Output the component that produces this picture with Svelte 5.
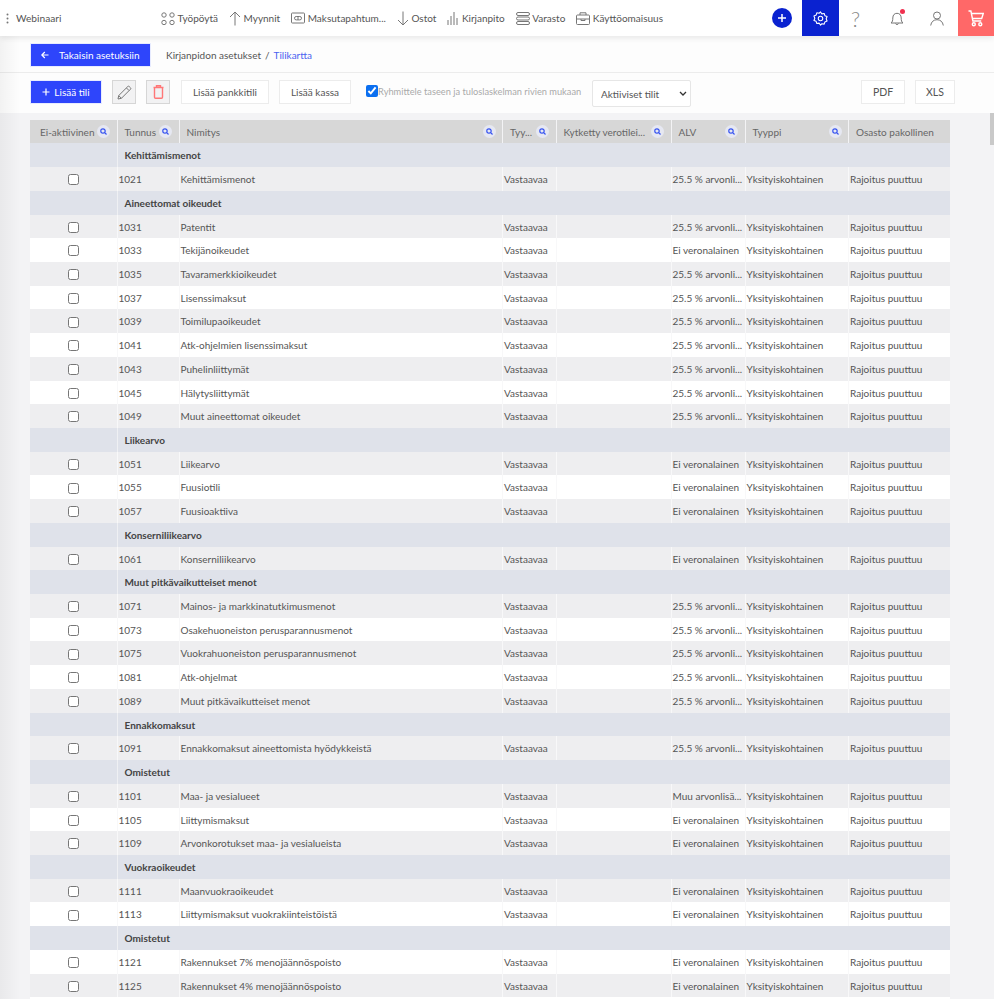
<script>
  const groups = [
    ['Kehittämismenot', [['1021','Kehittämismenot','a']]],
    ['Aineettomat oikeudet', [['1031','Patentit','a'],['1033','Tekijänoikeudet','e'],['1035','Tavaramerkkioikeudet','a'],['1037','Lisenssimaksut','a'],['1039','Toimilupaoikeudet','a'],['1041','Atk-ohjelmien lisenssimaksut','a'],['1043','Puhelinliittymät','a'],['1045','Hälytysliittymät','a'],['1049','Muut aineettomat oikeudet','a']]],
    ['Liikearvo', [['1051','Liikearvo','e'],['1055','Fuusiotili','e'],['1057','Fuusioaktiiva','e']]],
    ['Konserniliikearvo', [['1061','Konserniliikearvo','e']]],
    ['Muut pitkävaikutteiset menot', [['1071','Mainos- ja markkinatutkimusmenot','a'],['1073','Osakehuoneiston perusparannusmenot','a'],['1075','Vuokrahuoneiston perusparannusmenot','a'],['1081','Atk-ohjelmat','a'],['1089','Muut pitkävaikutteiset menot','a']]],
    ['Ennakkomaksut', [['1091','Ennakkomaksut aineettomista hyödykkeistä','a']]],
    ['Omistetut', [['1101','Maa- ja vesialueet','m'],['1105','Liittymismaksut','e'],['1109','Arvonkorotukset maa- ja vesialueista','e']]],
    ['Vuokraoikeudet', [['1111','Maanvuokraoikeudet','e'],['1113','Liittymismaksut vuokrakiinteistöistä','e']]],
    ['Omistetut', [['1121','Rakennukset 7% menojäännöspoisto','e'],['1125','Rakennukset 4% menojäännöspoisto','e']]]
  ];
  const vat = { a: '25.5 % arvonli...', e: 'Ei veronalainen', m: 'Muu arvonlisä...' };
  const rows = [];
  groups.forEach(([title, items]) => {
    rows.push({ title, odd: false });
    items.forEach(([code, name, v]) => rows.push({ code, name, alv: vat[v], odd: rows.length % 2 === 1 }));
  });
  const heads = [
    ['Ei-aktiivinen', true], ['Tunnus', true], ['Nimitys', true], ['Tyy...', true],
    ['Kytketty verotilei...', true], ['ALV', true], ['Tyyppi', true], ['Osasto pakollinen', false]
  ];
</script>

<div class="page">
  <div class="edge"></div>
  <header class="top">
    <svg class="dots" width="3" height="11" viewBox="0 0 3 11"><circle cx="1.5" cy="1.5" r="1" /><circle cx="1.5" cy="5.5" r="1" /><circle cx="1.5" cy="9.5" r="1" /></svg>
    <span class="brand">Webinaari</span>
    <nav class="nav">
      <span class="item"><svg width="14" height="13" viewBox="0 0 14 13"><circle cx="3" cy="3" r="2.2"/><circle cx="11" cy="3" r="2.2"/><circle cx="3" cy="10.5" r="2.2"/><circle cx="11" cy="10.5" r="2.2"/></svg>Työpöytä</span>
      <span class="item"><svg width="12" height="15" viewBox="0 0 12 15"><path d="M6 14.5V1M1 6l5-5 5 5"/></svg>Myynnit</span>
      <span class="item"><svg width="14" height="12" viewBox="0 0 14 12"><rect x=".5" y="1" width="13" height="10" rx=".8"/><rect x="3.5" y="4.500" width="7" height="3.400" rx="1.700"/><path d="M7 4.500v3.400"/></svg>Maksutapahtum...</span>
      <span class="item"><svg width="12" height="15" viewBox="0 0 12 15"><path d="M6 .5V14M1 9l5 5 5-5"/></svg>Ostot</span>
      <span class="item"><svg width="12" height="14" viewBox="0 0 12 14"><path d="M1 14V9M4 14V5M7 14V1M10 14V7"/></svg>Kirjanpito</span>
      <span class="item"><svg width="14" height="13" viewBox="0 0 14 13"><rect x=".5" y=".5" width="13" height="3" rx="1.500"/><rect x=".5" y="5" width="13" height="3" rx="1.500"/><rect x=".5" y="9.500" width="13" height="3" rx="1.500"/></svg>Varasto</span>
      <span class="item"><svg width="14" height="13" viewBox="0 0 14 13"><rect x=".5" y="3" width="13" height="9.500" rx="1"/><path d="M4 3V.8h6V3M.5 7h13M5 7v1.500h4V7"/></svg>Käyttöomaisuus</span>
    </nav>
    <span class="plus"><svg width="10" height="10" viewBox="0 0 10 10"><path d="M5 1v8M1 5h8"/></svg></span>
    <span class="gear">
      <svg width="15" height="15" viewBox="0 0 24 24"><circle cx="12" cy="12" r="3.600"/><path d="M12 1.500l2.200 3.100 3.700-.7 1.100 3.600 3.500 1.400-1.400 3.600 1.400 3.600-3.500 1.400-1.100 3.500-3.700-.6L12 22.500l-2.200-3.100-3.700.6L5 16.500 1.500 15.100 2.900 11.500 1.500 7.900 5 6.500l1.100-3.600 3.700.7z" stroke-linejoin="round"/></svg>
    </span>
    <span class="tool q">?</span>
    <span class="tool bell">
      <svg width="14" height="15" viewBox="0 0 14 15"><path d="M1 12c1.500-1.200 1.800-2.500 1.800-5C2.800 4 4.500 2.300 7 2.300S11.200 4 11.200 7c0 2.500.3 3.800 1.800 5zM5.500 12.500a1.600 1.600 0 0 0 3 0"/></svg>
      <i class="dot"></i>
    </span>
    <span class="tool user"><svg width="14" height="15" viewBox="0 0 14 15"><circle cx="7" cy="4.500" r="3.500"/><path d="M.7 14.500c.5-3.800 3-5.800 6.300-5.800s5.800 2 6.300 5.800"/></svg></span>
    <span class="cart">
      <svg width="16" height="17" viewBox="0 0 16 17"><path d="M.5 1h2.400l2 10h8.300M3.500 3.500h11.800l-1.600 5H4.500"/><circle cx="5.800" cy="14.300" r="1.500"/><circle cx="12.300" cy="14.300" r="1.500"/></svg>
    </span>
  </header>

  <div class="crumbs">
    <button class="primary back"><svg width="8" height="8" viewBox="0 0 8 8"><path d="M7.500 4H.8M3.800 1 .8 4l3 3"/></svg>Takaisin asetuksiin</button>
    <span class="path">Kirjanpidon asetukset</span><span class="sep">/</span><span class="link">Tilikartta</span>
  </div>

  <div class="toolbar">
    <button class="primary add"><svg width="8" height="8" viewBox="0 0 8 8"><path d="M4 .5v7M.5 4h7"/></svg>Lisää tili</button>
    <button class="square"><svg width="15" height="15" viewBox="0 0 15 15"><path d="M1 14l.7-3.400L10.800 1.500a1 1 0 0 1 1.400 0l1.300 1.300a1 1 0 0 1 0 1.400L4.400 13.300zM9.500 3l2.500 2.500M1.700 10.600l2.700 2.700" /></svg></button>
    <button class="square red"><svg width="11" height="14" viewBox="0 0 11 14"><path d="M.5 2.500h10M3.500 2.500V.8h4v1.700M1.500 2.500v9.700a1 1 0 0 0 1 1h6a1 1 0 0 0 1-1V2.500"/></svg></button>
    <button class="plain bank">Lisää pankkitili</button>
    <button class="plain cash">Lisää kassa</button>
    <label class="check"><input type="checkbox" checked />Ryhmittele taseen ja tuloslaskelman rivien mukaan</label>
    <span class="selwrap">
      <select class="sel"><option>Aktiiviset tilit</option></select>
      <svg class="chev" width="8" height="5" viewBox="0 0 8 5"><path d="M1 1l3 3 3-3"/></svg>
    </span>
    <button class="plain pdf">PDF</button>
    <button class="plain xls">XLS</button>
  </div>

  <div class="content">
    <div class="table">
      <div class="row head">
        {#each heads as [label, search]}
          <div class="th">
            <span>{label}</span>
            {#if search}
              <span class="mag"><svg width="7" height="7" viewBox="0 0 7 7"><circle cx="3" cy="3" r="2.200"/><path d="M4.700 4.700 6.500 6.500"/></svg></span>
            {/if}
          </div>
        {/each}
      </div>
      {#each rows as r}
        {#if r.title}
          <div class="row group">
            <div class="gfirst"></div>
            <div class="gtitle">{r.title}</div>
          </div>
        {:else}
          <div class="row data" class:odd={r.odd}>
            <div class="td boxcell"><input type="checkbox" /></div>
            <div class="td">{r.code}</div>
            <div class="td">{r.name}</div>
            <div class="td">Vastaavaa</div>
            <div class="td"></div>
            <div class="td">{r.alv}</div>
            <div class="td">Yksityiskohtainen</div>
            <div class="td">Rajoitus puuttuu</div>
          </div>
        {/if}
      {/each}
      <div class="row data"></div>
    </div>
    <div class="thumb"></div>
  </div>
</div>

<style>
  :global(body) { margin: 0; background: #f3f3f5; }
  .page {
    position: relative; width: 994px; height: 999px; overflow: hidden;
    font-family: Lato, "Open Sans", sans-serif; font-size: 10px; color: #555;
    background: #f3f3f5;
  }
  .edge {
    position: absolute; left: 0; top: 36px; bottom: 0; width: 20px; z-index: 3; pointer-events: none;
    background: linear-gradient(to right, rgba(0,0,0,.045), rgba(0,0,0,0));
  }
  svg { fill: none; stroke: #777; stroke-width: 1; display: block; flex: none; }

  .top {
    position: relative; z-index: 4; height: 36px; display: flex; align-items: center; background: #fff;
    box-shadow: 0 2px 6px rgba(0,0,0,.09);
  }
  .dots { margin-left: 6px; fill: #777; stroke: none; }
  .brand { margin-left: 7px; width: 145px; font-size: 10.200px; color: #555; }
  .nav { display: flex; align-items: center; width: 611px; }
  .item { display: flex; align-items: center; gap: 2.500px; margin-right: 11px; color: #555; font-size: 10px; }
  .plus {
    width: 20px; height: 20px; border-radius: 50%; background: #0a22d0;
    display: flex; align-items: center; justify-content: center;
  }
  .plus svg { stroke: #fff; stroke-width: 1.500; }
  .gear {
    margin-left: 10px; width: 37px; height: 36px; background: #0a22d0;
    display: flex; align-items: center; justify-content: center;
  }
  .gear svg { stroke: #fff; stroke-width: 1.700; }
  .tool { height: 36px; display: flex; align-items: center; justify-content: center; position: relative; }
  .q { font-size: 21px; color: #888; font-weight: 300; width: 33px; }
  .bell { width: 50px; }
  .dot { position: absolute; left: 27.500px; top: 8.500px; width: 5px; height: 5px; border-radius: 50%; background: #f0304f; }
  .user { width: 30px; }
  .cart {
    margin-left: 6px; flex: 1; height: 36px; background: #ff6868;
    display: flex; align-items: center; justify-content: center;
  }
  .cart svg { stroke: #fff; stroke-width: 1.400; }

  button { font-family: inherit; font-size: 10px; box-sizing: border-box; cursor: pointer; }
  .crumbs {
    height: 37px; box-sizing: border-box; background: #fdfdfd; padding: 7px 0 0 30px;
    display: flex; align-items: flex-start; border-bottom: 1px solid #ececec;
  }
  .primary {
    background: #2e45fb; color: #fff; border: 1px solid #e7ebff; height: 24px;
    display: flex; align-items: center;
  }
  .primary svg { stroke: #fff; stroke-width: 1.200; }
  .back { width: 121px; padding: 0 0 0 10px; gap: 10px; }
  .path { margin-left: 15px; line-height: 24px; color: #555; }
  .sep { margin: 0 4px; line-height: 24px; color: #555; }
  .link { line-height: 24px; color: #4b63f0; }

  .toolbar {
    height: 40px; box-sizing: border-box; background: #fdfdfd; padding: 7px 0 0 30px;
    display: flex; align-items: flex-start;
  }
  .add { width: 72px; justify-content: center; gap: 4px; }
  .square {
    width: 24px; height: 24px; margin-left: 10px; padding: 0; background: #f2f2f3; border: 1px solid #d6d6d6;
    display: flex; align-items: center; justify-content: center;
  }
  .square.red svg { stroke: #f77; stroke-width: 1.400; }
  .plain {
    height: 24px; background: #fff; border: 1px solid #ececec; color: #555; padding: 0;
  }
  .bank { width: 88px; margin-left: 11px; }
  .cash { width: 72px; margin-left: 10px; }
  .check {
    display: flex; align-items: center; margin-left: 15px; color: #aaa; height: 22px; width: 215px; white-space: nowrap; font-size: 9.250px;
  }
  .check input { width: 12px; height: 12px; margin: 0; accent-color: #0b6ff0; flex: none; }
  .selwrap { position: relative; width: 99px; height: 27px; margin-left: 11px; display: block; }
  .sel {
    appearance: none; width: 100%; height: 100%; box-sizing: border-box; background: #fff; border: 1px solid #e6e6e6; border-radius: 2px;
    font-family: inherit; font-size: 10px; color: #555; padding: 0 0 0 8px; display: block;
  }
  .chev { position: absolute; right: 4px; top: 11px; pointer-events: none; }
  .chev path { stroke: #333; stroke-width: 1.300; }
  .pdf { width: 44px; margin-left: 170px; font-size: 10.500px; }
  .xls { width: 40px; margin-left: 10px; font-size: 10.500px; }

  .content { position: relative; height: 886px; background: #f3f3f5; padding: 7px 0 0 30px; box-sizing: border-box; }
  .thumb { position: absolute; right: 0; top: 0; width: 4.500px; height: 32px; background: #c9c9c9; }
  .table { width: 920px; }
  .row {
    display: grid; height: 23.720px; box-sizing: border-box;
    grid-template-columns: 87.500px 62px 323.500px 53.500px 115px 74px 103.500px 101.500px;
  }
  .head { background: #d7d7d7; height: 23.400px; }
  .th {
    display: flex; align-items: center; justify-content: space-between; padding: 0 6.500px 0 10px; color: #666;
    border-right: 1px solid #f3f3f5; min-width: 0; white-space: nowrap; font-size: 10px;
  }
  .th:nth-child(n+2) { padding-left: 7px; }
  .th:last-child { border-right: 0; }
  .mag {
    width: 13px; height: 13px; border-radius: 50%; background: #e6e8f2; flex: none;
    display: flex; align-items: center; justify-content: center;
  }
  .mag svg { stroke: #3552f0; stroke-width: 1.200; }
  .group { background: #dfe2ea; }
  .gfirst { border-right: 1px solid #eff0f3; }
  .gtitle { grid-column: 2 / -1; padding: 1px 0 0 7px; font-weight: 700; color: #444; line-height: 22.720px; }
  .data { background: #fff; }
  .data.odd { background: #eeeef0; }
  .td {
    padding: 1px 0 0 1px; line-height: 22.720px; white-space: nowrap; overflow: hidden; color: #555;
    border-right: 1px solid #f8f8f9;
  }
  .td:last-child { border-right: 0; }
  .boxcell { display: flex; align-items: center; justify-content: center; padding: 1.500px 0 0; box-sizing: border-box; }
  .boxcell input { width: 11px; height: 11px; margin: 0; }
</style>
